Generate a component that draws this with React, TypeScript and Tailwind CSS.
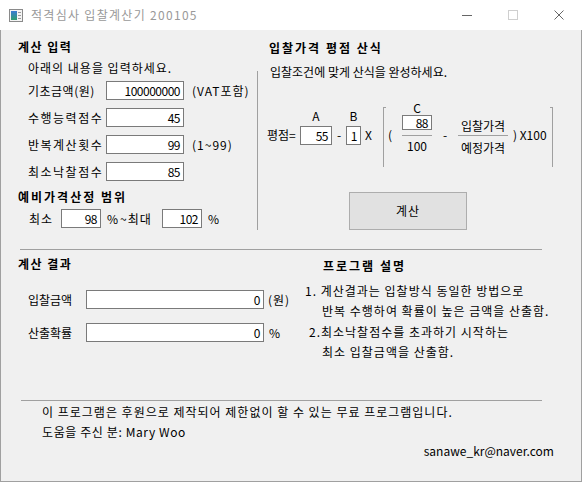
import React from 'react'

function AppIcon() {
  return (
    <svg width="14" height="13" viewBox="0 0 14 13" className="ml-[9px] shrink-0">
      <rect x="0.5" y="0.5" width="13" height="12" fill="#f4f4f4" stroke="#8a8a8a" />
      <defs>
        <linearGradient id="ig" x1="0" y1="0" x2="0" y2="1">
          <stop offset="0" stopColor="#3a7bd5" />
          <stop offset="1" stopColor="#2f9e6e" />
        </linearGradient>
      </defs>
      <rect x="2" y="2" width="6" height="9" fill="url(#ig)" />
      <rect x="9" y="3" width="3" height="1" fill="#9a9a9a" />
      <rect x="9" y="6" width="3" height="1" fill="#9a9a9a" />
      <rect x="9" y="9" width="3" height="1" fill="#9a9a9a" />
    </svg>
  )
}

function Box({ w, h = 'h-[19px]', value }: { w: string; h?: string; value: string }) {
  return (
    <div className={`${w} ${h} shrink-0 bg-white border border-[#7a7a7a] flex items-center justify-end pr-[3px] text-[12px] tracking-[-0.5px]`}>
      {value}
    </div>
  )
}

function InputRow({ label, track, value, suffix }: { label: string; track: string; value: string; suffix?: string }) {
  return (
    <div className="flex items-center h-[19px] pl-[27px]">
      <span className={`w-[78px] shrink-0 whitespace-nowrap ${track}`}>{label}</span>
      <Box w="w-[78px]" value={value} />
      {suffix && <span className="ml-[8px] tracking-[1px]">{suffix}</span>}
    </div>
  )
}

export default function App() {
  return (
    <div className="w-[582px] h-[482px] flex flex-col bg-white font-['Noto_Sans_CJK_KR',sans-serif] text-[12px] leading-[14px] text-black">
      {/* title bar */}
      <div className="h-[30px] shrink-0 flex items-center bg-white">
        <AppIcon />
        <span className="ml-[8px] text-[#999] tracking-[1.3px]">적격심사 입찰계산기 200105</span>
        <div className="ml-auto flex h-full">
          <div className="w-[46px] h-full flex items-center justify-center">
            <div className="w-[10px] h-px bg-[#666]" />
          </div>
          <div className="w-[46px] h-full flex items-center justify-center">
            <div className="w-[10px] h-[10px] border border-[#cfcfcf]" />
          </div>
          <div className="w-[46px] h-full flex items-center justify-center">
            <svg width="10" height="10" viewBox="0 0 10 10">
              <path d="M0.5 0.5 L9.5 9.5 M9.5 0.5 L0.5 9.5" stroke="#666" strokeWidth="1" />
            </svg>
          </div>
        </div>
      </div>

      {/* body */}
      <div className="flex-1 flex flex-col bg-[#f0f0f0] border-x border-b border-[#a0a0a0]">
        {/* top section */}
        <div className="flex h-[219px] shrink-0">
          {/* input panel */}
          <div className="w-[256px] shrink-0 flex flex-col">
            <div className="mt-[10px] pl-[17px] font-bold tracking-[1.5px]">계산 입력</div>
            <div className="mt-[7px] pl-[27px] tracking-[1px]">아래의 내용을 입력하세요.</div>
            <div className="mt-[6px] flex flex-col gap-[8px]">
              <InputRow label="기초금액(원)" track="tracking-[0.5px]" value="100000000" suffix="(VAT포함)" />
              <InputRow label="수행능력점수" track="tracking-[1.5px]" value="45" />
              <InputRow label="반복계산횟수" track="tracking-[1.5px]" value="99" suffix="(1~99)" />
              <InputRow label="최소낙찰점수" track="tracking-[1.5px]" value="85" />
            </div>
            <div className="mt-[9px] pl-[17px] font-bold tracking-[2px]">예비가격산정 범위</div>
            <div className="mt-[5px] pl-[28px] h-[19px] flex items-center">
              <span className="w-[32px] shrink-0 tracking-[1px]">최소</span>
              <Box w="w-[40px]" value="98" />
              <span className="w-[61px] shrink-0 flex items-center pl-[6px] whitespace-nowrap">
                <span>%</span>
                <span className="ml-[2px] tracking-[1px]">~최대</span>
              </span>
              <Box w="w-[40px]" value="102" />
              <span className="pl-[6px]">%</span>
            </div>
          </div>

          <div className="w-px shrink-0 mt-[41px] h-[159px] bg-[#a0a0a0]" />

          {/* formula panel */}
          <div className="flex-1 flex flex-col">
            <div className="mt-[11px] pl-[11px] font-bold tracking-[2px]">입찰가격 평점 산식</div>
            <div className="mt-[10px] pl-[12px]">입찰조건에 맞게 산식을 완성하세요.</div>
            <div className="mt-[24px] h-[64px] flex items-start pl-[9px]">
              <span className="w-[33px] shrink-0 mt-[25px]">평점=</span>
              <div className="w-[32px] shrink-0 flex flex-col items-center">
                <span className="mt-[6px]">A</span>
                <div className="mt-[3px] w-full">
                  <Box w="w-full" value="55" />
                </div>
              </div>
              <span className="w-[14px] shrink-0 mt-[25px] text-center">-</span>
              <div className="w-[15px] shrink-0 flex flex-col items-center">
                <span className="mt-[6px]">B</span>
                <div className="mt-[3px] w-full">
                  <Box w="w-full" value="1" />
                </div>
              </div>
              <span className="w-[22px] shrink-0 mt-[25px] pl-[4px]">X</span>
              <div className="w-[3px] h-[60px] mt-[4px] shrink-0 border-l border-t border-[#a0a0a0]" />
              <span className="w-[16px] shrink-0 mt-[25px] pl-[2px]">(</span>
              <div className="w-[30px] shrink-0 flex flex-col items-center">
                <span className="h-[10px] leading-[9px]">C</span>
                <div className="mt-[2px] w-full">
                  <Box w="w-full" h="h-[15px]" value="88" />
                </div>
                <div className="mt-[5px] w-full h-px bg-[#a0a0a0]" />
                <span className="mt-[3px]">100</span>
              </div>
              <span className="w-[26px] shrink-0 mt-[25px] text-center">-</span>
              <div className="w-[50px] shrink-0 flex flex-col items-center">
                <span className="mt-[16px]">입찰가격</span>
                <div className="mt-[2px] w-full h-px bg-[#a0a0a0]" />
                <span className="mt-[5px]">예정가격</span>
              </div>
              <span className="w-[42px] shrink-0 mt-[25px] pl-[5px] whitespace-pre">) X100</span>
              <div className="w-[3px] h-[60px] mt-[4px] shrink-0 border-r border-t border-[#a0a0a0]" />
            </div>
            <button className="mt-[25px] ml-[91px] w-[118px] h-[38px] border border-[#adadad] bg-[#e1e1e1] flex items-center justify-center text-[12px] tracking-[1px]">
              계산
            </button>
          </div>
        </div>

        <div className="h-px shrink-0 ml-[19px] w-[522px] bg-[#a0a0a0]" />

        {/* result section */}
        <div className="flex h-[150px] shrink-0">
          <div className="w-[299px] shrink-0 flex flex-col">
            <div className="mt-[7px] pl-[17px] font-bold tracking-[1.5px]">계산 결과</div>
            <div className="mt-[19px] pl-[27px] h-[19px] flex items-center">
              <span className="w-[58px] shrink-0">입찰금액</span>
              <Box w="w-[178px]" value="0" />
              <span className="pl-[4px] tracking-[1px]">(원)</span>
            </div>
            <div className="mt-[14px] pl-[27px] h-[19px] flex items-center">
              <span className="w-[58px] shrink-0">산출확률</span>
              <Box w="w-[178px]" value="0" />
              <span className="pl-[5px]">%</span>
            </div>
          </div>
          <div className="flex-1 flex flex-col tracking-[1px] whitespace-nowrap">
            <div className="mt-[9px] pl-[23px] font-bold tracking-[2px]">프로그램 설명</div>
            <div className="mt-[11px] pl-[5px]">1. 계산결과는 입찰방식 동일한 방법으로</div>
            <div className="mt-[6px] pl-[22px]">반복 수행하여 확률이 높은 금액을 산출함.</div>
            <div className="mt-[7px] pl-[9px]">2.최소낙찰점수를 초과하기 시작하는</div>
            <div className="mt-[6px] pl-[22px]">최소 입찰금액을 산출함.</div>
          </div>
        </div>

        <div className="h-px shrink-0 ml-[20px] w-[521px] bg-[#a0a0a0]" />

        {/* footer */}
        <div className="flex flex-col">
          <div className="mt-[4px] pl-[41px] tracking-[1px]">이 프로그램은 후원으로 제작되어 제한없이 할 수 있는 무료 프로그램입니다.</div>
          <div className="mt-[6px] pl-[41px] tracking-[0.6px]">도움을 주신 분: Mary Woo</div>
          <div className="mt-[5px] pr-[27px] text-right">sanawe_kr@naver.com</div>
        </div>
      </div>
    </div>
  )
}
